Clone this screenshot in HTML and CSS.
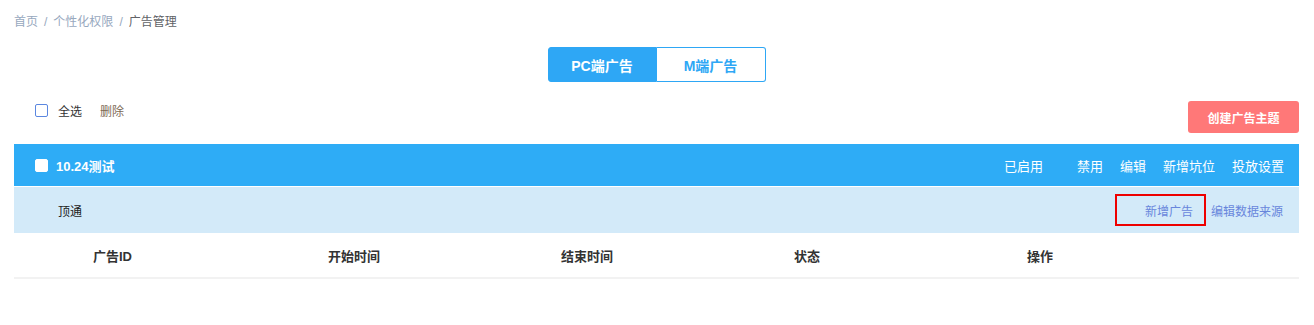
FILE: index.html
```html
<!DOCTYPE html>
<html lang="zh-CN">
<head>
    <meta charset="UTF-8">
    <title>广告管理</title>
    <link rel="stylesheet" href="styles.css">
</head>
<body>
    <div class="page">
        <div class="breadcrumb">
            <a href="#">首页</a><span class="sep">/</span><a href="#">个性化权限</a><span class="sep">/</span><span class="current">广告管理</span>
        </div>

        <div class="tabs">
            <button class="tab active">PC端广告</button>
            <button class="tab">M端广告</button>
        </div>

        <div class="toolbar">
            <div class="toolbar-left">
                <label class="check"><span class="box"></span>全选</label>
                <a href="#" class="del">删除</a>
            </div>
            <button class="btn-create">创建广告主题</button>
        </div>

        <div class="theme">
            <div class="theme-head">
                <label class="check check-white"><span class="box"></span>10.24测试</label>
                <div class="theme-actions">
                    <span class="status">已启用</span>
                    <a href="#">禁用</a>
                    <a href="#">编辑</a>
                    <a href="#">新增坑位</a>
                    <a href="#">投放设置</a>
                </div>
            </div>
            <div class="slot">
                <span class="slot-name">顶通</span>
                <div class="slot-actions">
                    <a href="#" class="highlight">新增广告</a>
                    <a href="#">编辑数据来源</a>
                </div>
            </div>
            <div class="table-head">
                <div>广告ID</div>
                <div>开始时间</div>
                <div>结束时间</div>
                <div>状态</div>
                <div>操作</div>
            </div>
        </div>
    </div>
</body>
</html>
```

FILE: styles.css
```css
* {
    margin: 0;
    padding: 0;
    box-sizing: border-box;
    font-family: "Microsoft YaHei", "Liberation Sans", "Noto Sans CJK SC", sans-serif;
}

body {
    background-color: #fff;
    color: #333;
}

a {
    text-decoration: none;
}

.page {
    padding: 14px 15px 0 14px;
}

.breadcrumb {
    font-size: 12px;
    line-height: 16px;
    color: #97a8be;
}

.breadcrumb a {
    color: #97a8be;
}

.breadcrumb .sep {
    margin: 0 6px;
    color: #97a8be;
}

.breadcrumb .current {
    color: #606266;
}

.tabs {
    display: flex;
    justify-content: center;
    margin-top: 17px;
}

.tab {
    width: 109px;
    height: 35px;
    font-size: 14px;
    font-weight: bold;
    color: #2ea7f5;
    background-color: #fff;
    border: 1px solid #2ea7f5;
    cursor: pointer;
}

.tab:first-child {
    border-radius: 3px 0 0 3px;
}

.tab:last-child {
    border-radius: 0 3px 3px 0;
    border-left: none;
}

.tab.active {
    background-color: #2ea7f5;
    color: #fff;
}

.toolbar {
    display: flex;
    justify-content: space-between;
    align-items: flex-start;
    margin-top: 19px;
}

.toolbar-left {
    display: flex;
    align-items: center;
    padding: 1px 0 0 21px;
    font-size: 12px;
}

.check {
    display: flex;
    align-items: center;
    color: #333;
    cursor: pointer;
}

.check .box {
    width: 13px;
    height: 13px;
    border: 1px solid #5b87e0;
    border-radius: 2px;
    background-color: #fff;
    margin-right: 10px;
}

.del {
    margin-left: 18px;
    color: #7d6a55;
}

.btn-create {
    width: 111px;
    height: 32px;
    background-color: #ff7878;
    color: #fff;
    border: none;
    border-radius: 3px;
    font-size: 12px;
    font-weight: bold;
    cursor: pointer;
}

.theme {
    margin-top: 11px;
}

.theme-head {
    display: flex;
    justify-content: space-between;
    align-items: center;
    height: 42px;
    padding: 0 15px 0 21px;
    background-color: #2eacf6;
    color: #fff;
}

.check-white {
    color: #fff;
    font-size: 13px;
    font-weight: bold;
}

.check-white .box {
    border-color: #fff;
    margin-right: 8px;
}

.theme-actions {
    display: flex;
    font-size: 13px;
}

.theme-actions .status {
    margin-right: 17px;
}

.theme-actions a {
    color: #fff;
    margin-left: 17px;
}

.slot {
    display: flex;
    justify-content: space-between;
    align-items: center;
    height: 46px;
    margin-top: 1px;
    padding: 0 16px 0 44px;
    background-color: #d3eaf9;
    font-size: 12px;
}

.slot-name {
    color: #222;
}

.slot-actions {
    display: flex;
    align-items: center;
}

.slot-actions a {
    color: #6886dc;
}

.slot-actions .highlight {
    display: flex;
    align-items: center;
    justify-content: flex-end;
    width: 91px;
    height: 32px;
    padding-right: 11px;
    margin-right: 5px;
    border: 2px solid #ee0000;
}

.table-head {
    display: grid;
    grid-template-columns: 235px 233px 233px 233px 1fr;
    height: 46px;
    align-items: center;
    border-bottom: 2px solid #f2f2f2;
    font-size: 13px;
    font-weight: bold;
    color: #333;
}

.table-head div {
    padding-left: 79px;
}
```
